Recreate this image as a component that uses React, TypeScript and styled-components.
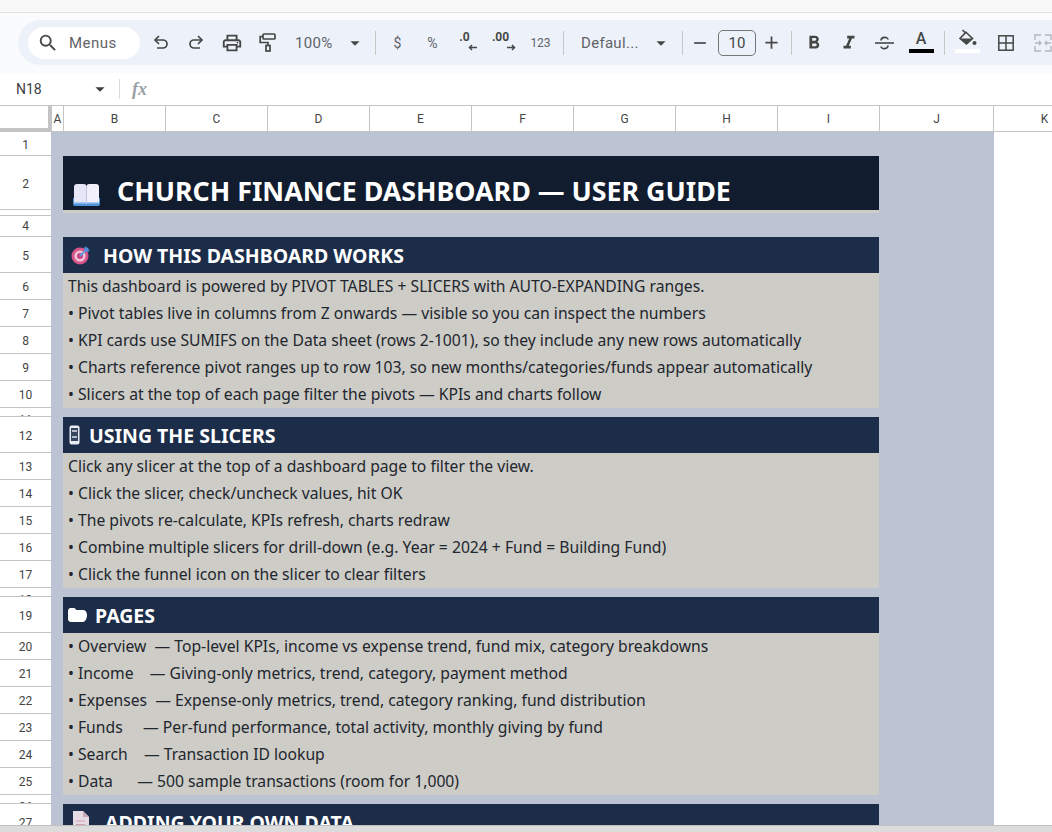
import { ReactNode } from "react";
import styled, { createGlobalStyle } from "styled-components";
import {
  MdAdd,
  MdArrowDropDown,
  MdFormatBold,
  MdFormatItalic,
  MdOutlinePrint,
  MdRemove,
  MdSearch,
} from "react-icons/md";

const UI_FONT = `Roboto, "Liberation Sans", sans-serif`;
const SHEET_FONT = `"Noto Sans", Inter, sans-serif`;

const GlobalStyle = createGlobalStyle`
  html, body {
    margin: 0;
    padding: 0;
    background: #fff;
  }
  * {
    box-sizing: border-box;
  }
`;

const UndoIcon = ({ flip }: { flip?: boolean }) => (
  <svg
    width="16"
    height="15"
    viewBox="0 0 16 15"
    fill="none"
    stroke="currentColor"
    strokeWidth="1.700"
    transform={flip ? "scale(-1 1)" : undefined}
  >
    <path d="M6 1L2 5l4 4" />
    <path d="M2 5h8a4 4 0 0 1 0 8H4" />
  </svg>
);

const RollerIcon = () => (
  <svg width="17" height="19" viewBox="0 0 17 19" fill="none" stroke="currentColor" strokeWidth="1.700">
    <rect x="4" y="1" width="12" height="5" rx="1" />
    <path d="M4 3.500H1.200V9.500H9V12.500" />
    <rect x="7" y="12.500" width="4" height="5.500" />
  </svg>
);

const StrikeIcon = () => (
  <svg width="19" height="16" viewBox="0 0 19 16" fill="none" stroke="currentColor" strokeWidth="1.600">
    <path d="M0 8h19" />
    <path d="M6 5.500C6 1.500 13 1.500 13 4.500" />
    <path d="M6 11.500C6 14.500 13 14.500 13 10.500" />
  </svg>
);

const FillIcon = () => (
  <svg width="19" height="18" viewBox="0 0 19 18">
    <path d="M4.500 1l3 3" stroke="currentColor" strokeWidth="1.600" />
    <path d="M8 3.200L14.500 9.500 8.500 15 2 9.500z" fill="none" stroke="currentColor" strokeWidth="1.600" />
    <path d="M2 9.500h12.500L8.500 15z" fill="currentColor" />
    <circle cx="16.500" cy="14" r="2" fill="currentColor" />
  </svg>
);

const BordersIcon = () => (
  <svg width="16" height="16" viewBox="0 0 16 16" fill="none" stroke="currentColor" strokeWidth="1.500">
    <rect x="0.800" y="0.800" width="14.400" height="14.400" />
    <path d="M8 1v14M1 8h14" />
  </svg>
);

const MergeIcon = () => (
  <svg width="18" height="18" viewBox="0 0 18 18" fill="none" stroke="currentColor" strokeWidth="1.400">
    <path d="M7 1H1v5M1 12v5h6M11 1h6v5M17 12v5h-6M1 9h6M5 7l2 2-2 2M17 9h-6M13 7l-2 2 2 2" />
  </svg>
);

const ArrowLeft = () => (
  <svg width="9" height="7" viewBox="0 0 9 7" fill="none" stroke="currentColor" strokeWidth="1.500">
    <path d="M9 3.500H1.500M4 1L1.500 3.500 4 6" />
  </svg>
);

const ArrowRight = () => (
  <svg width="9" height="7" viewBox="0 0 9 7" fill="none" stroke="currentColor" strokeWidth="1.500">
    <path d="M0 3.500h7.500M5 1l2.500 2.500L5 6" />
  </svg>
);

const BookIcon = () => (
  <svg width="27" height="23" viewBox="0 0 27 23">
    <path d="M0 15h27v6q0 2-2 2H2q-2 0-2-2z" fill="#4f93dc" />
    <path d="M1 4q0-3 3-3h7q2 0 2.500 2V20H1z" fill="#e6e6f6" />
    <path d="M26 4q0-3-3-3h-7q-2 0-2.500 2V20H26z" fill="#f1f0fb" />
    <path d="M1 19h12.500v1.500H1zM13.500 19H26v1.500H13.500z" fill="#a9cbf0" />
    <path d="M13.500 3v18" stroke="#c6c2e4" strokeWidth="1" />
  </svg>
);

const TargetIcon = () => (
  <svg width="20" height="20" viewBox="0 0 20 20">
    <circle cx="9" cy="11" r="8.500" fill="#d8558c" />
    <circle cx="9" cy="11" r="5.600" fill="#f3c4d8" />
    <circle cx="9" cy="11" r="3" fill="#c9447f" />
    <path d="M9 11l8-8" stroke="#5aa0e0" strokeWidth="1.800" />
    <path d="M15 1l1 3 3 1-2 2-3-1-1-3z" fill="#4a90d9" />
  </svg>
);

const PhoneIcon = () => (
  <svg width="11" height="20" viewBox="0 0 11 20">
    <rect x="0.500" y="0.500" width="10" height="19" rx="2" fill="#e8ebf2" />
    <rect x="2" y="3" width="7" height="13" fill="#39465f" />
    <path d="M3 6h5M3 12h5" stroke="#dfe4ee" strokeWidth="1.500" />
  </svg>
);

const FolderIcon = () => (
  <svg width="19" height="14" viewBox="0 0 19 14">
    <path
      d="M0 3c0-1.500 1-3 2.500-3h4l2 2H15c2.500 0 4 2 4 5s-1.500 7-4 7H3c-2 0-3-1.500-3-3z"
      fill="#fff"
    />
  </svg>
);

const DocIcon = () => (
  <svg width="19" height="22" viewBox="0 0 19 22">
    <path d="M1 0h10l6 6v16H1z" fill="#e6dbe3" />
    <path d="M11 0l6 6h-6z" fill="#c9a9b6" />
    <path d="M4 10h9M4 13.500h9M4 17h7" stroke="#cfa0b2" strokeWidth="1.200" />
    <path d="M12 19l5-5 2 2-5 5z" fill="#d8455f" />
  </svg>
);

type RowKind = "blank" | "title" | "heading" | "text" | "spacer";

type SheetRowData = {
  height: number;
  kind: RowKind;
  text?: string;
  icon?: ReactNode;
  iconInset?: number;
  iconGap?: number;
};

const rows: SheetRowData[] = [
  { height: 24, kind: "blank" },
  { height: 54, kind: "title", text: "CHURCH FINANCE DASHBOARD — USER GUIDE", icon: <BookIcon /> },
  { height: 3, kind: "spacer" },
  { height: 24, kind: "blank" },
  { height: 36, kind: "heading", text: "HOW THIS DASHBOARD WORKS", icon: <TargetIcon />, iconInset: 8, iconGap: 12 },
  { height: 27, kind: "text", text: "This dashboard is powered by PIVOT TABLES + SLICERS with AUTO-EXPANDING ranges." },
  { height: 27, kind: "text", text: "• Pivot tables live in columns from Z onwards — visible so you can inspect the numbers" },
  { height: 27, kind: "text", text: "• KPI cards use SUMIFS on the Data sheet (rows 2-1001), so they include any new rows automatically" },
  { height: 27, kind: "text", text: "• Charts reference pivot ranges up to row 103, so new months/categories/funds appear automatically" },
  { height: 27, kind: "text", text: "• Slicers at the top of each page filter the pivots — KPIs and charts follow" },
  { height: 9, kind: "blank" },
  { height: 36, kind: "heading", text: "USING THE SLICERS", icon: <PhoneIcon />, iconInset: 6, iconGap: 9 },
  { height: 27, kind: "text", text: "Click any slicer at the top of a dashboard page to filter the view." },
  { height: 27, kind: "text", text: "• Click the slicer, check/uncheck values, hit OK" },
  { height: 27, kind: "text", text: "• The pivots re-calculate, KPIs refresh, charts redraw" },
  { height: 27, kind: "text", text: "• Combine multiple slicers for drill-down (e.g. Year = 2024 + Fund = Building Fund)" },
  { height: 27, kind: "text", text: "• Click the funnel icon on the slicer to clear filters" },
  { height: 9, kind: "blank" },
  { height: 36, kind: "heading", text: "PAGES", icon: <FolderIcon />, iconInset: 5, iconGap: 8 },
  { height: 27, kind: "text", text: "• Overview  — Top-level KPIs, income vs expense trend, fund mix, category breakdowns" },
  { height: 27, kind: "text", text: "• Income    — Giving-only metrics, trend, category, payment method" },
  { height: 27, kind: "text", text: "• Expenses  — Expense-only metrics, trend, category ranking, fund distribution" },
  { height: 27, kind: "text", text: "• Funds     — Per-fund performance, total activity, monthly giving by fund" },
  { height: 27, kind: "text", text: "• Search    — Transaction ID lookup" },
  { height: 27, kind: "text", text: "• Data      — 500 sample transactions (room for 1,000)" },
  { height: 9, kind: "blank" },
  { height: 36, kind: "heading", text: "ADDING YOUR OWN DATA", icon: <DocIcon />, iconInset: 9, iconGap: 14 },
];

const columns = [
  { label: "A", width: 12 },
  { label: "B", width: 102 },
  { label: "C", width: 102 },
  { label: "D", width: 102 },
  { label: "E", width: 102 },
  { label: "F", width: 102 },
  { label: "G", width: 102 },
  { label: "H", width: 102 },
  { label: "I", width: 102 },
  { label: "J", width: 114 },
  { label: "K", width: 102 },
];

export default function App() {
  return (
    <>
      <GlobalStyle />
      <Page>
        <TopStrip />
        <ToolbarArea>
          <Toolbar>
            <SearchPill>
              <MdSearch size={22} />
              <span>Menus</span>
            </SearchPill>
            <IconButton><UndoIcon /></IconButton>
            <IconButton><UndoIcon flip /></IconButton>
            <IconButton><MdOutlinePrint size={22} /></IconButton>
            <IconButton><RollerIcon /></IconButton>
            <Dropdown $width={86} $pad={10} $end={5}>
              <span>100%</span>
              <MdArrowDropDown size={22} />
            </Dropdown>
            <Separator />
            <TextButton $width={35}>$</TextButton>
            <TextButton $width={35}>%</TextButton>
            <TextButton $width={36}>
              <Decimal>.0<ArrowLeft /></Decimal>
            </TextButton>
            <TextButton $width={36}>
              <Decimal>.00<ArrowRight /></Decimal>
            </TextButton>
            <TextButton $width={37} $small>123</TextButton>
            <Separator />
            <Dropdown $width={110} $pad={13} $end={6}>
              <span>Defaul...</span>
              <MdArrowDropDown size={22} />
            </Dropdown>
            <Separator />
            <IconButton $width={26}><MdRemove size={20} /></IconButton>
            <SizeBox>10</SizeBox>
            <IconButton $width={31}><MdAdd size={21} /></IconButton>
            <Separator />
            <IconButton><MdFormatBold size={22} /></IconButton>
            <IconButton><MdFormatItalic size={22} /></IconButton>
            <IconButton><StrikeIcon /></IconButton>
            <ColorButton>
              <span>A</span>
              <ColorBar $color="#000" />
            </ColorButton>
            <Separator />
            <ColorButton>
              <FillIcon />
              <ColorBar $color="#fff" />
            </ColorButton>
            <IconButton $width={40}><BordersIcon /></IconButton>
            <IconButton $faded><MergeIcon /></IconButton>
          </Toolbar>
        </ToolbarArea>

        <FormulaBar>
          <NameBox>
            <span>N18</span>
            <MdArrowDropDown size={22} />
          </NameBox>
          <FormulaDivider />
          <FxLabel>fx</FxLabel>
        </FormulaBar>

        <ColumnHeader>
          <Corner />
          {columns.map((col) => (
            <ColumnCell key={col.label} $width={col.width}>
              {col.label}
            </ColumnCell>
          ))}
        </ColumnHeader>

        <Sheet>
          {rows.map((row, i) => (
            <SheetRow key={i} $height={row.height}>
              <RowNumber $compact={row.height < 20}>{row.height > 3 ? i + 1 : ""}</RowNumber>
              <Band>
                {row.kind === "title" && (
                  <TitleCell>
                    {row.icon}
                    <span>{row.text}</span>
                  </TitleCell>
                )}
                {row.kind === "heading" && (
                  <HeadingCell $inset={row.iconInset ?? 6} $gap={row.iconGap ?? 12}>
                    {row.icon}
                    <span>{row.text}</span>
                  </HeadingCell>
                )}
                {row.kind === "text" && <TextCell>{row.text}</TextCell>}
                {row.kind === "spacer" && <TextCell />}
              </Band>
            </SheetRow>
          ))}
        </Sheet>

        <ScrollTrack />
      </Page>
    </>
  );
}

const Page = styled.div`
  width: 1052px;
  height: 832px;
  display: flex;
  flex-direction: column;
  overflow: hidden;
  background: #fff;
  font-family: ${UI_FONT};
`;

const TopStrip = styled.div`
  height: 13px;
  flex: none;
  background: #f8f8f8;
  border-bottom: 1px solid #e3e3e3;
`;

const ToolbarArea = styled.div`
  height: 60px;
  flex: none;
  padding: 7px 0 8px 18px;
  background: #f9fbfd;
`;

const Toolbar = styled.div`
  height: 45px;
  width: 1100px;
  display: flex;
  align-items: center;
  padding-left: 10px;
  border-radius: 23px 0 0 23px;
  background: #edf2fa;
  color: #444746;
`;

const SearchPill = styled.div`
  width: 112px;
  height: 32px;
  flex: none;
  display: flex;
  align-items: center;
  gap: 10px;
  padding-left: 9px;
  margin-right: 3px;
  border-radius: 16px;
  background: #fff;
  font-size: 15px;
  letter-spacing: 0.5px;
  span {
    color: #5f6368;
  }
`;

const IconButton = styled.div<{ $width?: number; $faded?: boolean }>`
  width: ${(p) => p.$width ?? 35.5}px;
  flex: none;
  display: flex;
  align-items: center;
  justify-content: center;
  color: ${(p) => (p.$faded ? "#b4b8bc" : "inherit")};
`;

const Dropdown = styled.div<{ $width: number; $pad: number; $end: number }>`
  width: ${(p) => p.$width}px;
  flex: none;
  display: flex;
  align-items: center;
  justify-content: space-between;
  padding: 0 ${(p) => p.$end}px 0 ${(p) => p.$pad}px;
  font-size: 15px;
  letter-spacing: 0.3px;
  span {
    color: #5f6368;
  }
`;

const Separator = styled.div`
  width: 1px;
  height: 24px;
  flex: none;
  margin: 0 4px;
  background: #c7c7c7;
`;

const TextButton = styled.div<{ $width: number; $small?: boolean }>`
  width: ${(p) => p.$width}px;
  flex: none;
  display: flex;
  justify-content: center;
  font-size: ${(p) => (p.$small ? 12 : 14)}px;
  color: #5f6368;
`;

const Decimal = styled.span`
  display: inline-flex;
  align-items: flex-start;
  font-size: 12px;
  font-weight: 700;
  line-height: 12px;
  color: #444746;
  transform: translateY(-2px);
  svg {
    margin: 13px 0 0 -2px;
  }
`;

const SizeBox = styled.div`
  width: 38px;
  height: 26px;
  flex: none;
  display: flex;
  align-items: center;
  justify-content: center;
  margin-left: 5px;
  border: 1px solid #747775;
  border-radius: 5px;
  font-size: 15px;
`;

const ColorButton = styled.div`
  width: 37px;
  height: 24px;
  flex: none;
  display: flex;
  flex-direction: column;
  align-items: center;
  justify-content: flex-end;
  margin-bottom: 3px;
  font-size: 16px;
  font-weight: 500;
  line-height: 16px;
  svg {
    margin-top: -2px;
  }
`;

const ColorBar = styled.div<{ $color: string }>`
  width: 25px;
  height: 4px;
  flex: none;
  margin-top: 2px;
  background: ${(p) => p.$color};
`;

const FormulaBar = styled.div`
  height: 33px;
  flex: none;
  display: flex;
  align-items: center;
  padding-left: 16px;
  border-bottom: 1px solid #c4c4c4;
  color: #3c4043;
`;

const NameBox = styled.div`
  width: 95px;
  display: flex;
  align-items: center;
  justify-content: space-between;
  font-size: 14px;
`;

const FormulaDivider = styled.div`
  width: 1px;
  height: 20px;
  margin-left: 8px;
  background: #dadce0;
`;

const FxLabel = styled.div`
  margin-left: 12px;
  font-family: "Liberation Serif", serif;
  font-style: italic;
  font-weight: 700;
  font-size: 18px;
  color: #9aa0a6;
`;

const ColumnHeader = styled.div`
  height: 26px;
  flex: none;
  display: flex;
`;

const Corner = styled.div`
  width: 52px;
  flex: none;
  background: #fff;
  border-right: 4px solid #c4c4c4;
  border-bottom: 4px solid #c4c4c4;
`;

const ColumnCell = styled.div<{ $width: number }>`
  width: ${(p) => p.$width}px;
  flex: none;
  display: flex;
  align-items: center;
  justify-content: center;
  border-right: 1px solid #c4c4c4;
  border-bottom: 1px solid #c4c4c4;
  font-size: 12px;
  color: #444;
`;

const Sheet = styled.div`
  flex: 1;
  min-height: 0;
  overflow: hidden;
`;

const SheetRow = styled.div<{ $height: number }>`
  height: ${(p) => p.$height}px;
  display: flex;
`;

const RowNumber = styled.div<{ $compact: boolean }>`
  width: 51px;
  flex: none;
  display: flex;
  justify-content: center;
  align-items: ${(p) => (p.$compact ? "flex-start" : "center")};
  padding-top: ${(p) => (p.$compact ? 5 : 2)}px;
  overflow: hidden;
  border-bottom: 1px solid #c4c4c4;
  font-size: 12px;
  color: #444;
`;

const Band = styled.div`
  width: 943px;
  flex: none;
  display: flex;
  padding: 0 115px 0 12px;
  background: #bcc4d3;
`;

const TitleCell = styled.div`
  width: 816px;
  display: flex;
  align-items: flex-end;
  gap: 17px;
  padding: 0 0 2px 10px;
  background: #111c2e;
  color: #fff;
  font-family: ${SHEET_FONT};
  font-size: 26.8px;
  font-weight: 700;
  line-height: 34px;
  svg {
    margin-bottom: 2px;
  }
`;

const HeadingCell = styled.div<{ $inset: number; $gap: number }>`
  width: 816px;
  display: flex;
  align-items: center;
  gap: ${(p) => p.$gap}px;
  padding-left: ${(p) => p.$inset}px;
  background: #1c2d4a;
  color: #fff;
  font-family: ${SHEET_FONT};
  font-size: 19.5px;
  font-weight: 700;
`;

const TextCell = styled.div`
  width: 816px;
  display: flex;
  align-items: center;
  padding: 0 0 1px 5px;
  background: #cdccc6;
  color: #22262e;
  font-family: ${SHEET_FONT};
  font-size: 15.7px;
  white-space: pre;
`;

const ScrollTrack = styled.div`
  height: 7px;
  flex: none;
  background: #dcdcdc;
  border-top: 1px solid #c0c0c0;
`;
